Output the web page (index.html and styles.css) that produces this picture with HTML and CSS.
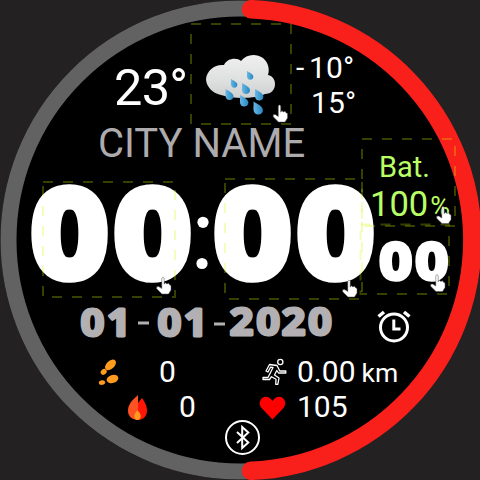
FILE: index.html
```html
<!DOCTYPE html>
<html lang="en">
<head>
<meta charset="utf-8">
<title>Watch face</title>
<link rel="stylesheet" href="styles.css">
</head>
<body>
<main class="face">
  <svg class="dial" viewBox="0 0 480 480">
    <circle cx="240" cy="240" r="239.5" fill="#000"/>
    <circle class="track" cx="240" cy="240" r="231.5"/>
    <path class="progress" d="M251 9.2A231 231 0 0 1 251 470.8"/>
  </svg>

  <section class="weather">
    <div class="temp">23°</div>
    <svg class="cloud" viewBox="191 24 100 100">
      <defs>
        <linearGradient id="cg" x1="0" y1="0" x2="0" y2="1"><stop offset="0" stop-color="#f0f0f0"/><stop offset=".6" stop-color="#dedfdf"/><stop offset="1" stop-color="#cdcfd0"/></linearGradient>
        <linearGradient id="dg" x1="0" y1="0" x2="1" y2="0"><stop offset="0" stop-color="#6ab6e4"/><stop offset=".5" stop-color="#459fd3"/><stop offset="1" stop-color="#2b86bd"/></linearGradient>
        <path id="drop" fill="url(#dg)" d="M0 0C3 2 8 4 8 7.200A4 4 0 0 1 .3 8.500C-.6 5 .5 3 0 0Z"/>
      </defs>
      <path fill="url(#cg)" d="M224 65C227 58 237 57 241 61C246 54 256 53 263 58C268 62 270 69 268 75C273 76 275 80 275 84C275 90 271 94 265 94C255 99 234 99 221 95C212 93 206 86 206 79C207 70 215 64 224 65Z"/>
      <use href="#drop" transform="translate(247 71) scale(.8)"/>
      <use href="#drop" transform="translate(231 79) scale(.8)"/>
      <use href="#drop" transform="translate(242 83)"/>
      <use href="#drop" transform="translate(225.500 89)"/>
      <use href="#drop" transform="translate(255 89) scale(1.050)"/>
      <use href="#drop" transform="translate(240 95) scale(1.050)"/>
      <use href="#drop" transform="translate(253.500 101.500) scale(1.180)"/>
    </svg>
    <div class="range">
      <div class="low"><span class="minus">-</span>10°</div>
      <div class="high">15°</div>
    </div>
  </section>

  <section class="middle">
    <div class="main">
      <div class="city">CITY NAME</div>
      <svg class="time" viewBox="0 170 380 130">
        <g>
          <text transform="translate(69.500 273.300) scale(1.110 1)">0</text>
          <text transform="translate(152.500 273.300) scale(1.110 1)">0</text>
          <text transform="translate(252.500 273.300) scale(1.110 1)">0</text>
          <text transform="translate(335.700 273.300) scale(1.110 1)">0</text>
        </g>
        <circle cx="203" cy="222.300" r="5.600"/>
        <circle cx="202" cy="263.500" r="5.600"/>
      </svg>
      <svg class="date" viewBox="0 300 360 45">
        <text transform="scale(1.080 1)" y="336" x="85.600 109.900">01</text>
        <text transform="scale(1.080 1)" y="336" x="156.900 180.900">01</text>
        <text transform="scale(1.080 1)" y="335" x="223.600 248.300 271.800 296.300">2020</text>
        <path d="M138 323h11M214 324h11"/>
      </svg>
    </div>
    <aside class="side">
      <div class="battery">
        <div class="bat-label">Bat.</div>
        <div class="bat-value">100<span class="percent">%</span></div>
      </div>
      <svg class="seconds" viewBox="360 226 100 70">
        <text transform="translate(395.700 278) scale(1.110 1)">0</text>
        <text transform="translate(431.700 278) scale(1.110 1)">0</text>
      </svg>
      <svg class="alarm" viewBox="376 310 36 34">
        <circle cx="394" cy="327.500" r="13.500" fill="none" stroke-width="3"/>
        <path d="M393.800 319.500V329H400.500" fill="none" stroke-width="3"/>
        <path d="M378.500 316.500L384 312M404 312L409.500 316.500" stroke-width="3.500"/>
      </svg>
    </aside>
  </section>

  <section class="stats">
    <div class="steps">
      <svg width="20" height="27" viewBox="98 359 20 27" fill="#ff9c20">
        <ellipse cx="110.500" cy="364.900" rx="6.500" ry="4" transform="rotate(-43 110.500 364.900)"/>
        <ellipse cx="103.700" cy="371.900" rx="3.200" ry="2.700" transform="rotate(-43 103.700 371.900)"/>
        <ellipse cx="112.500" cy="379" rx="6" ry="4" transform="rotate(-18 112.500 379)"/>
        <ellipse cx="102" cy="382.600" rx="3.200" ry="2.300" transform="rotate(-10 102 382.600)"/>
      </svg>
      <span>0</span>
    </div>
    <div class="distance">
      <svg width="26" height="27" viewBox="262 359 26 27" fill="none" stroke="#fff" stroke-width="1.300" stroke-linejoin="round">
        <circle cx="280.300" cy="362" r="2.600"/>
        <path d="M266 371L269.500 364.500L277 365.500L279.800 371H285.800V373H278.500L276.800 370.500L274.500 375L279 378L277.800 384.300H275.700L276 379.300L271.500 376.700L269.500 379.500H263V377.500H268L273 367.500L270.500 367.200L268 372Z"/>
      </svg>
      <span>0.00</span><span class="unit">km</span>
    </div>
    <div class="calories">
      <svg width="20" height="26" viewBox="128 392 20 26">
        <path fill="#fc5122" d="M138 392C131 398 128 402 128 408C128 413 132 417 138 417Z"/>
        <path fill="#ff1607" d="M138 417V400L142 395C146 401 147 404 147 408C147 413 143 417 138 417Z"/>
        <path fill="#ff9c20" d="M137.500 407.500C142 411 141.500 417 137.500 417S133 411 137.500 407.500Z"/>
      </svg>
      <span>0</span>
    </div>
    <div class="heart">
      <svg width="27" height="24" viewBox="259 395 27 24"><path fill="#f00" d="M272.500 418.500L262 407.500C256 401 263 393 269 396.500Q271.500 398 272.500 400Q273.500 398 276 396.500C282 393 289 401 283 407.500Z"/></svg>
      <span>105</span>
    </div>
  </section>

  <svg class="bluetooth" viewBox="224 419 37 37">
    <circle cx="242.500" cy="437.500" r="16.500"/>
    <path d="M237 432L248.300 442.500L242.200 448V427L248.300 432.500L237 443"/>
  </svg>

  <svg class="zones" viewBox="0 0 480 480">
    <defs>
      <path id="hand" fill="#fff" stroke="#555" stroke-width=".5" d="M-1.200 1Q0-1 1.200 1V7.200L2.300 5.800L4 7L5.500 6.200L6.800 8L8 8.500V13L5.500 17H-1L-6.300 11.800V9.800L-4.300 9.600L-1.200 11.500Z"/>
    </defs>
    <g class="outlines">
      <rect x="191" y="24" width="100" height="100"/>
      <rect x="43" y="182" width="132" height="115"/>
      <rect x="225" y="179" width="137" height="120"/>
      <rect x="362" y="139" width="93" height="87"/>
      <rect x="360.500" y="224.500" width="88.500" height="69.500"/>
    </g>
    <use href="#hand" x="279.500" y="105"/>
    <use href="#hand" x="163" y="277"/>
    <use href="#hand" x="349" y="280"/>
    <use href="#hand" x="443" y="206.500"/>
    <use href="#hand" x="437" y="274.500"/>
  </svg>
</main>
</body>
</html>
```
FILE: styles.css
```css
body { margin: 0; background: #232122; }
svg { display: block; flex: none; overflow: visible; }
.face {
  position: relative;
  box-sizing: border-box;
  width: 480px;
  height: 480px;
  padding-top: 24px;
  overflow: hidden;
  font-family: Roboto, "Liberation Sans", sans-serif;
  color: #fff;
}
.dial, .zones { position: absolute; top: 0; left: 0; width: 480px; height: 480px; }
.dial { z-index: -1; }
.track { fill: none; stroke: #626262; stroke-width: 16; }
.progress { fill: none; stroke: #f91f1a; stroke-width: 18.5; stroke-linecap: round; }

.weather { display: flex; height: 100px; }
.temp { box-sizing: border-box; width: 191px; padding: 34px 0 0 114px; font-size: 50.5px; line-height: 60px; letter-spacing: -.7px; white-space: nowrap; }
.cloud { width: 100px; height: 100px; }
.range { padding: 26px 0 0 5px; font-size: 30px; line-height: 35px; letter-spacing: .2px; }
.minus { display: inline-block; width: 13px; }
.high { padding-left: 15px; }

.middle { display: flex; height: 231px; }
.main { width: 360px; }
.city { height: 46px; padding-left: 98px; box-sizing: border-box; font-size: 40px; line-height: 40px; color: #adabad; white-space: nowrap; }
.time { width: 380px; height: 130px; fill: #fff; }
.time text, .date text, .seconds text { font-family: "Open Sans", sans-serif; font-weight: 400; text-anchor: middle; stroke-linejoin: round; }
.time text { font-size: 109px; stroke: #fff; stroke-width: 17.5; }
.date { width: 360px; height: 45px; fill: #b3b0b3; }
.date text { font-size: 38px; font-weight: 700; stroke: #b3b0b3; stroke-width: 3; }
.date path { stroke: #b3b0b3; stroke-width: 3; }
.side { width: 120px; padding-top: 15px; }
.battery { height: 87px; color: #b8ff66; }
.bat-label { padding: 11px 0 0 19px; font-size: 29px; line-height: 34px; }
.bat-value { padding-left: 10px; font-size: 34.5px; line-height: 40px; white-space: nowrap; }
.percent { font-size: 27px; margin-left: 2px; }
.seconds { width: 100px; height: 70px; fill: #fff; }
.seconds text { font-size: 46.5px; stroke: #fff; stroke-width: 7.6; }
.alarm { width: 36px; height: 34px; margin: 14px 0 0 16px; stroke: #fff; }

.stats { display: grid; grid-template-columns: 240px 240px; grid-template-rows: 35px 35px; font-size: 30px; line-height: 33px; }
.stats > div { display: flex; align-items: center; }
.stats span { padding-bottom: 2px; }
.steps { padding-left: 98px; gap: 41px; }
.calories { padding-left: 128px; gap: 31px; }
.distance { padding-left: 22px; gap: 9px; }
.heart { padding-left: 19px; gap: 11px; }
.stats .unit { margin-left: -3px; padding: 0; font-size: 26.5px; }
.bluetooth { width: 37px; height: 37px; margin: -6px 0 0 224px; fill: none; stroke: #fff; stroke-width: 2; }

.outlines { fill: none; stroke: #d7f600; stroke-opacity: .26; stroke-width: 2; stroke-dasharray: 10 10; }
```
